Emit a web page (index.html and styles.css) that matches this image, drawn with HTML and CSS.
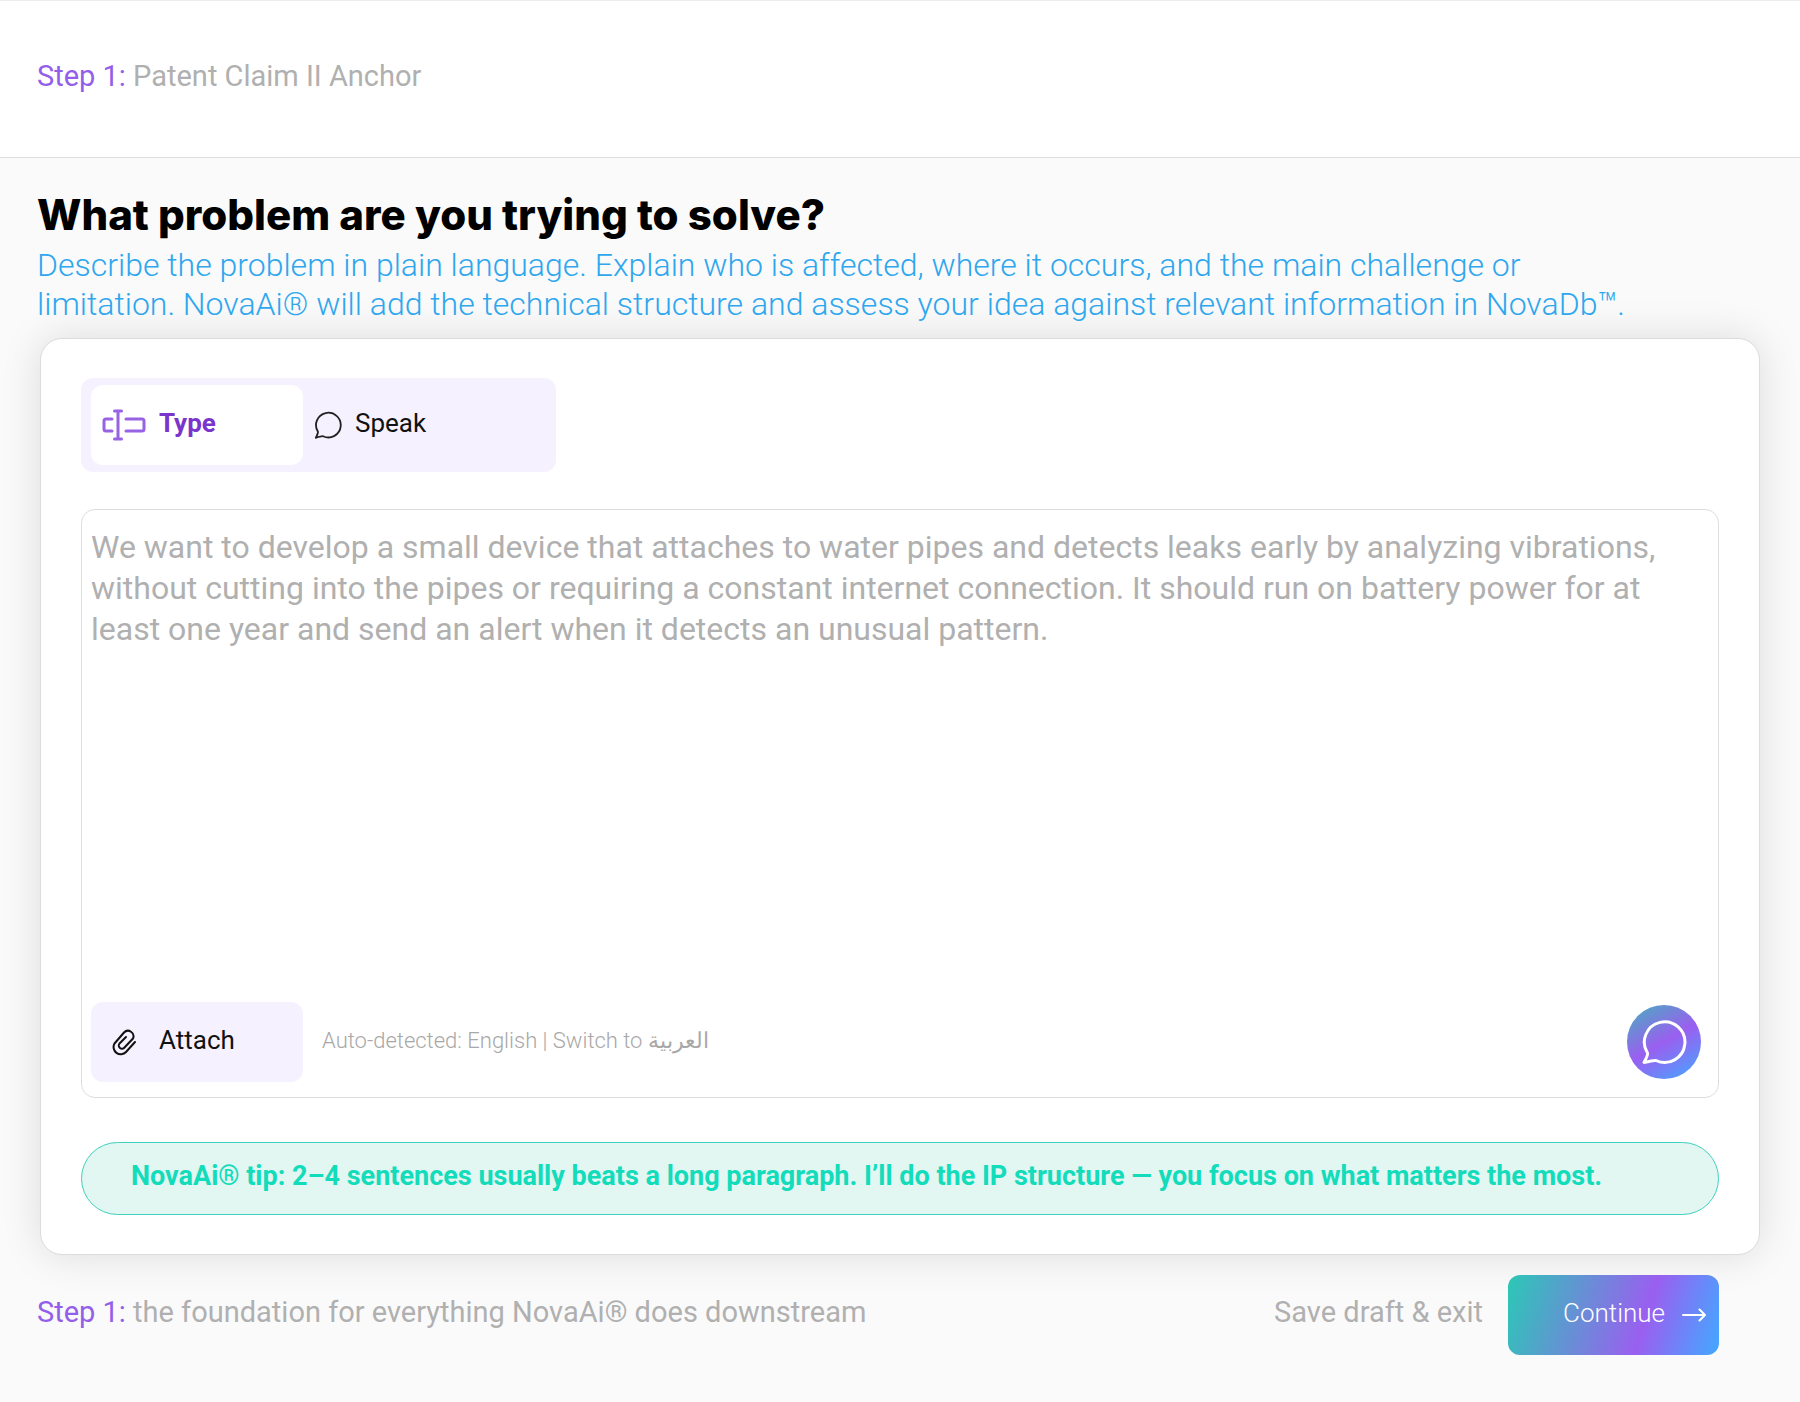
FILE: index.html
```html
<!DOCTYPE html>
<html lang="en">
<head>
  <meta charset="UTF-8" />
  <meta name="viewport" content="width=device-width, initial-scale=1.0"/>
  <title>NovaAi - Step 1</title>
  <link rel="stylesheet" href="styles.css">
</head>
<body>

  <header>
    <p class="step"><span>Step 1:</span> Patent Claim II Anchor</p>
  </header>

  <main>
    <div class="intro">
      <h1>What problem are you trying to solve?</h1>
      <p>Describe the problem in plain language. Explain who is affected, where it occurs, and the main challenge or limitation. NovaAi® will add the technical structure and assess your idea against relevant information in NovaDb™.</p>
    </div>

    <div class="card">
      <div class="tabs">
        <button type="button" class="tab active">
          <svg width="44" height="32" viewBox="0 0 44 32" fill="none" stroke="#9763e4" stroke-width="3" stroke-linecap="round" stroke-linejoin="round">
            <path d="M10 10H4a2 2 0 0 0-2 2v8a2 2 0 0 0 2 2h6"/>
            <path d="M24 10h16a2 2 0 0 1 2 2v8a2 2 0 0 1-2 2H24"/>
            <path d="M16 2v28M12.500 2h7M12.500 30h7"/>
          </svg>
          <span class="label">Type</span>
        </button>
        <button type="button" class="tab">
          <svg width="28" height="28" viewBox="-1 -1 46 46" fill="none" stroke="#222" stroke-width="3" stroke-linejoin="round">
            <path d="M5.500 33A20.300 20.300 0 1 1 14 40.500Q12 40 2 43Q6 35 5.500 33Z"/>
          </svg>
          <span class="label">Speak</span>
        </button>
      </div>

      <div class="editor">
        <textarea aria-label="Problem description" placeholder="We want to develop a small device that attaches to water pipes and detects leaks early by analyzing vibrations, without cutting into the pipes or requiring a constant internet connection. It should run on battery power for at least one year and send an alert when it detects an unusual pattern."></textarea>
        <div class="toolbar">
          <button type="button" class="attach">
            <svg width="26" height="28" viewBox="12 8 26 28" fill="none" stroke="#111" stroke-width="2" stroke-linecap="round" stroke-linejoin="round">
              <path d="M35 22L26 32A7.200 7.200 0 0 1 14.500 23.500L24 12.500A5.500 5.500 0 0 1 33 18.500L24.500 27.500A3 3 0 0 1 19.500 23.500L26 17"/>
            </svg>
            <span class="label">Attach</span>
          </button>
          <p class="language">Auto-detected: English | <a href="#">Switch to <span lang="ar">العربية</span></a></p>
          <button type="button" class="chat-btn" aria-label="Chat">
            <svg width="46" height="46" viewBox="-1 -1 46 46" fill="none" stroke="#fff" stroke-width="3" stroke-linejoin="round">
              <path d="M5.500 33A20.300 20.300 0 1 1 14 40.500Q12 40 2 42.500Q6 35 5.500 33Z"/>
            </svg>
          </button>
        </div>
      </div>

      <p class="tip">NovaAi® tip: 2–4 sentences usually beats a long paragraph. I’ll do the IP structure — you focus on what matters the most.</p>
    </div>
  </main>

  <footer>
    <p class="step"><span>Step 1:</span> the foundation for everything NovaAi® does downstream</p>
    <a class="save" href="#">Save draft &amp; exit</a>
    <button type="button" class="continue">
      <span class="label">Continue</span>
      <svg width="24" height="14" viewBox="0 0 24 14" fill="none" stroke="#fff" stroke-width="2" stroke-linecap="round" stroke-linejoin="round">
        <path d="M1 7h22M17.500 1.500L23 7l-5.500 5.500"/>
      </svg>
    </button>
  </footer>

</body>
</html>
```
FILE: styles.css
```css
* {
  box-sizing: border-box;
}
body {
  margin: 0;
  font-family: Roboto, "DejaVu Sans", sans-serif;
  background: #fafafa;
  color: #111;
}
h1, p {
  margin: 0;
}
button {
  border: none;
  font-family: inherit;
  font-size: 26px;
  color: #111;
  display: flex;
  align-items: center;
  cursor: pointer;
}
svg {
  flex-shrink: 0;
}
.label {
  padding-bottom: 4px;
}

header {
  background: #fff;
  border-top: 1px solid #ececec;
  border-bottom: 1px solid #dedede;
  padding: 57px 37px 63px;
}
.step,
.save {
  font-size: 29px;
  line-height: 36px;
  color: #b0b0b0;
}
.step span {
  color: #935fea;
}

.intro {
  padding: 33px 37px 0;
}
.intro h1 {
  font-family: Inter, sans-serif;
  font-size: 42px;
  line-height: 48px;
  font-weight: 800;
  color: #000;
}
.intro p {
  margin-top: 7px;
  max-width: 1600px;
  font-size: 32px;
  line-height: 39px;
  font-weight: 300;
  color: #2ea7ee;
}

.card {
  margin: 14px 40px 0;
  padding: 39px 40px;
  background: #fff;
  border: 1px solid #dcdcdc;
  border-radius: 22px;
  box-shadow: 0 0 40px rgba(0,0,0,0.12);
}

/* Type / Speak switch */
.tabs {
  display: flex;
  width: fit-content;
  padding: 7px 41px 7px 10px;
  background: #f5f1ff;
  border-radius: 12px;
}
.tab {
  width: 212px;
  height: 80px;
  padding: 0 11px;
  gap: 13px;
  background: none;
  border-radius: 12px;
}
.tab.active {
  background: #fff;
  color: #7a35cc;
  font-weight: bold;
}

.editor {
  margin-top: 37px;
  padding: 17px 17px 15px 9px;
  border: 1px solid #dedede;
  border-radius: 14px;
}
.editor textarea {
  display: block;
  width: 100%;
  height: 475px;
  padding: 0;
  border: none;
  outline: none;
  resize: none;
  background: none;
  font-family: inherit;
  font-size: 32px;
  line-height: 41px;
}
.editor textarea::placeholder {
  color: #b0b0b0;
}
.toolbar {
  display: flex;
  align-items: center;
}
.attach {
  width: 212px;
  height: 80px;
  padding: 0 21px;
  gap: 21px;
  background: #f5f1ff;
  border-radius: 12px;
}
.language {
  margin-left: 19px;
  padding-bottom: 4px;
  font-size: 22px;
  font-weight: 300;
  color: #a8a8a8;
}
.language a {
  color: inherit;
  text-decoration: none;
}
.chat-btn {
  width: 74px;
  height: 74px;
  margin-left: auto;
  padding: 0;
  justify-content: center;
  border-radius: 50%;
  background: linear-gradient(150deg, #45b0bd 0%, #9a5ff0 50%, #42a9ff 100%);
}

.tip {
  margin-top: 44px;
  padding: 17px 49px 22px;
  font-size: 27px;
  line-height: 32px;
  font-weight: bold;
  color: #12dcba;
  background: #e2f6f2;
  border: 1px solid #3fd0be;
  border-radius: 37px;
}

footer {
  display: flex;
  align-items: center;
  padding: 20px 81px 47px 37px;
}
footer .step,
.save {
  padding-bottom: 6px;
}
.save {
  margin-left: auto;
  text-decoration: none;
}
.continue {
  width: 211px;
  height: 80px;
  margin-left: 25px;
  padding: 0 13px;
  gap: 17px;
  justify-content: flex-end;
  color: #fff;
  font-weight: 300;
  border-radius: 12px;
  background: linear-gradient(107deg, #2bc8b6 0%, #9a5ff0 64%, #42a9ff 100%);
}
```
